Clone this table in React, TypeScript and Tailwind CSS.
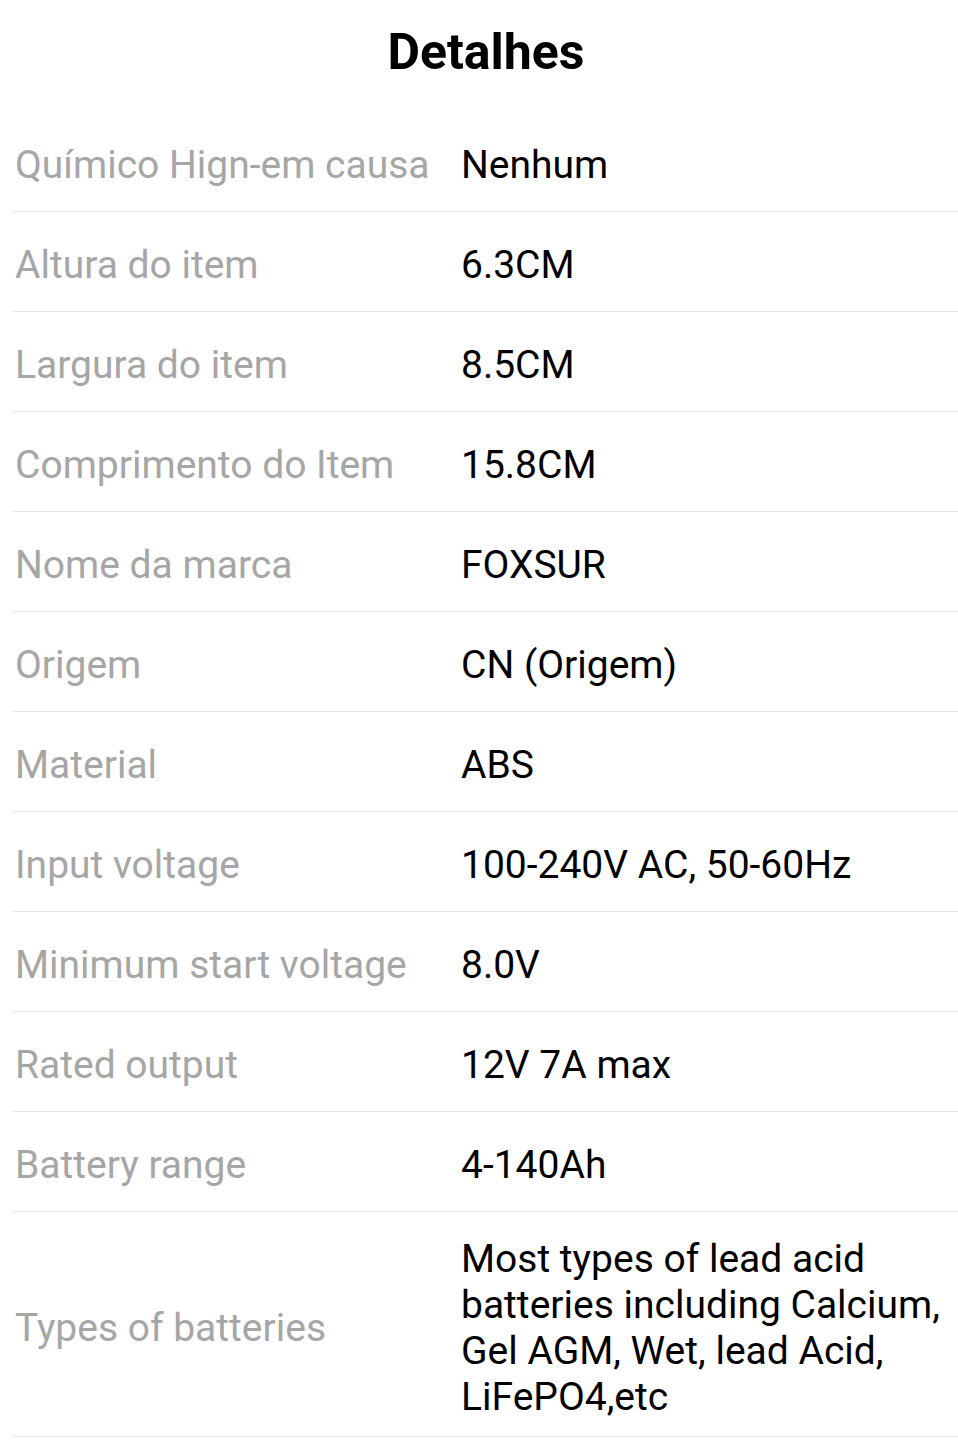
import React from "react";

const rows: [string, string][] = [
  ["Químico Hign-em causa", "Nenhum"],
  ["Altura do item", "6.3CM"],
  ["Largura do item", "8.5CM"],
  ["Comprimento do Item", "15.8CM"],
  ["Nome da marca", "FOXSUR"],
  ["Origem", "CN (Origem)"],
  ["Material", "ABS"],
  ["Input voltage", "100-240V AC, 50-60Hz"],
  ["Minimum start voltage", "8.0V"],
  ["Rated output", "12V 7A max"],
  ["Battery range", "4-140Ah"],
  [
    "Types of batteries",
    "Most types of lead acid batteries including Calcium, Gel AGM, Wet, lead Acid, LiFePO4,etc",
  ],
];

export default function App() {
  return (
    <div
      className="w-[958px] bg-white"
      style={{ fontFamily: "Roboto, 'Noto Sans', sans-serif" }}
    >
      <div className="h-[112px] flex justify-center pt-[22px] pl-[14px]">
        <h1 className="text-[50px] leading-[60px] font-bold text-black">Detalhes</h1>
      </div>
      <div className="pl-[13px]">
        {rows.map(([k, v], i) => (
          <div
            key={i}
            className={`flex items-center border-b border-[#e6e6e6] ${
              i === rows.length - 1 ? "pt-[24px] pb-[16px]" : "h-[100px] pt-[6px]"
            }`}
          >
            <div className="w-[448px] shrink-0 pl-[2px] text-[39px] leading-[46px] text-[#a6a6a6]">
              {k}
            </div>
            <div className="flex-1 pr-[10px] text-[39px] leading-[46px] text-black">
              {v}
            </div>
          </div>
        ))}
      </div>
    </div>
  );
}
